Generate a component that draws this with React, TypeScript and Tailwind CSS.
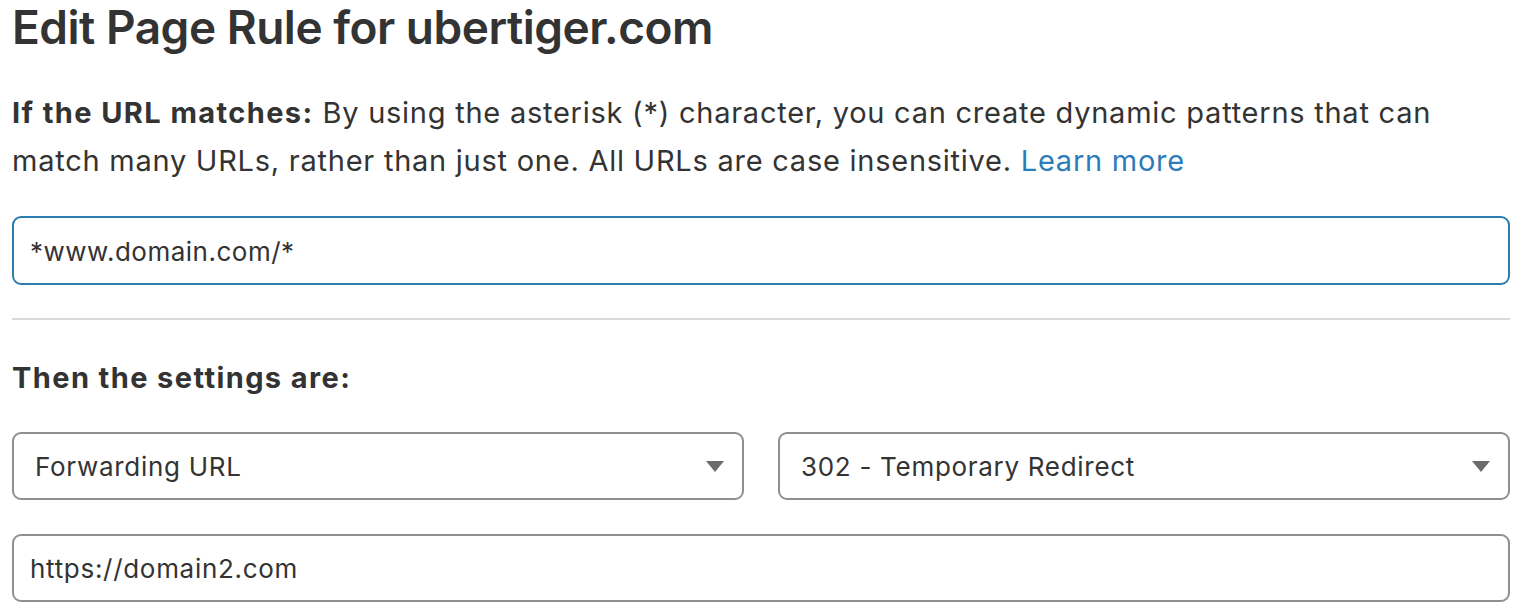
export default function App() {
  return (
    <div className="min-h-screen bg-white px-3 text-[#333333]" style={{ fontFamily: "Inter, 'Noto Sans', sans-serif" }}>
      <h1 className="text-[46px] leading-[54px] font-semibold tracking-[-0.5px]">Edit Page Rule for ubertiger.com</h1>

      <p className="mt-[35px] text-[29px] leading-[48px] tracking-[0.75px]">
        <span className="font-bold tracking-[1.4px]">If the URL matches:</span>{" "}
        By using the asterisk (*) character, you can create dynamic patterns that can match many URLs, rather than just one. All URLs are case insensitive.{" "}
        <a className="text-[#2c7cb9]">Learn more</a>
      </p>

      <div className="mt-[31px] flex h-[69px] items-center rounded-[9px] border-2 border-[#2c7cb0] px-4 pt-[2px] text-[26px] tracking-[0.5px]">
        *www.domain.com/*
      </div>

      <div className="mt-[33px] h-[2px] bg-[#d9d9d9]" />

      <h2 className="mt-[34px] text-[29px] leading-[48px] font-bold tracking-[1.4px]">Then the settings are:</h2>

      <div className="mt-[30px] flex gap-[34px]">
        <Select label="Forwarding URL" />
        <Select label="302 - Temporary Redirect" />
      </div>

      <div className="mt-[34px] flex h-[68px] items-center rounded-[9px] border-2 border-[#8f8f8f] px-4 text-[26px] tracking-[0.7px]">
        https://domain2.com
      </div>
    </div>
  );
}

function Select({ label }: { label: string }) {
  return (
    <div className="flex h-[68px] flex-1 items-center justify-between rounded-[9px] border-2 border-[#8f8f8f] pl-[21px] pr-[18px] text-[26px] tracking-[0.7px]">
      <span>{label}</span>
      <svg width="18" height="11" viewBox="0 0 18 11">
        <path d="M0 0 L18 0 L9 11 Z" fill="#6b6b6b" />
      </svg>
    </div>
  );
}
